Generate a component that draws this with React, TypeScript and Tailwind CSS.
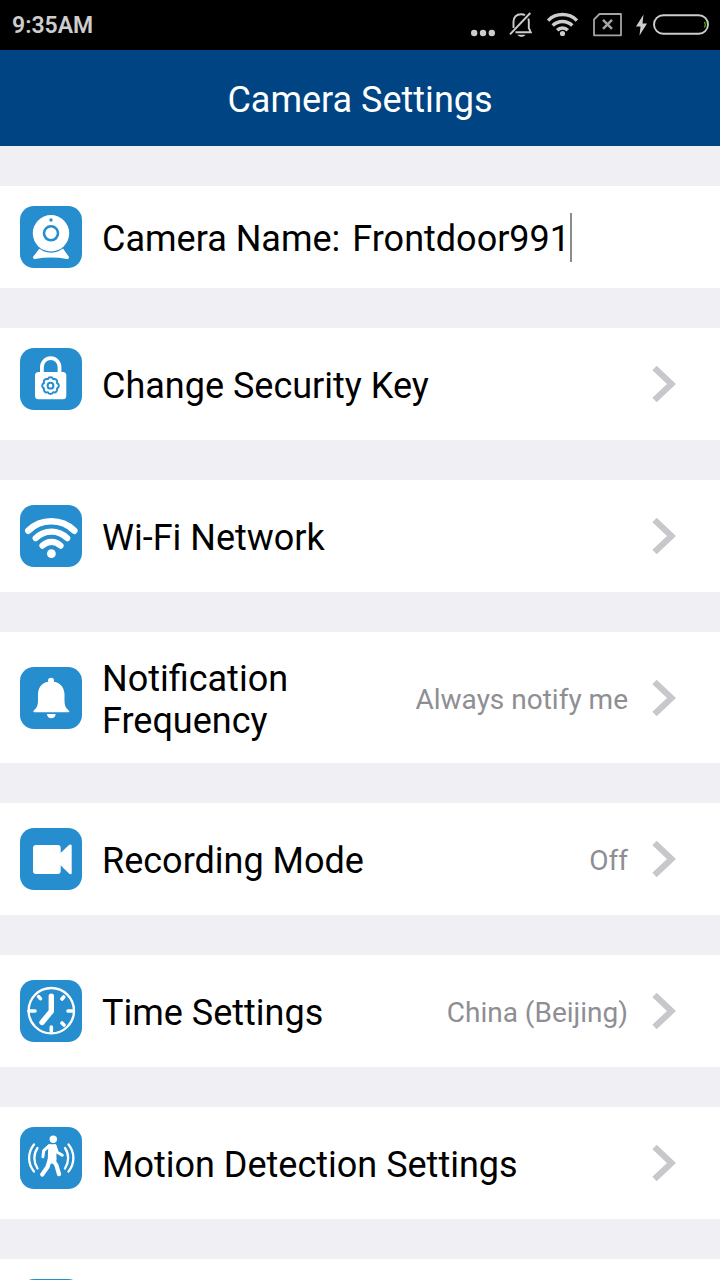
import type { ReactNode } from "react";

const BLUE = "#268dcf";

function IconTile({ children, top = false }: { children?: ReactNode; top?: boolean }) {
  return (
    <span
      className={`size-[62px] shrink-0 overflow-hidden rounded-[14px] bg-[#268dcf] ${top ? "self-start" : "self-center"}`}
    >
      <svg viewBox="0 0 62 62" className="size-full" fill="none" aria-hidden>
        {children}
      </svg>
    </span>
  );
}

function WebcamIcon() {
  return (
    <>
      <path
        d="M19.5 42.5 13.3 50.5c-.8 1.7.2 2.8 1.7 2.5 10.700-1.900 21.300-1.900 32 0 1.500.3 2.500-.8 1.700-2.500L43 42.500z"
        fill="#fff"
      />
      <circle cx="31" cy="27.300" r="19.400" fill={BLUE} />
      <circle cx="31" cy="27.300" r="18.200" fill="#fff" />
      <circle cx="31" cy="27.300" r="7" stroke={BLUE} strokeWidth="2.600" />
      <circle cx="31" cy="14" r="1.700" fill={BLUE} />
    </>
  );
}

function LockIcon() {
  return (
    <>
      <path d="M21.900 26v-7a8.800 8.800 0 0 1 17.600 0v7" stroke="#fff" strokeWidth="3.800" />
      <rect x="15" y="24" width="31.300" height="27.300" rx="3.500" fill="#fff" />
      <g transform="translate(30.500 37.700)" stroke={BLUE} strokeWidth="2">
        <path
          d="M6.500 2.700A2.900 2.900 0 0 1 2.700 6.500 2.900 2.900 0 0 1-2.700 6.500 2.900 2.900 0 0 1-6.500 2.700 2.900 2.900 0 0 1-6.500-2.700 2.900 2.900 0 0 1-2.700-6.500 2.900 2.900 0 0 1 2.700-6.500 2.900 2.900 0 0 1 6.500-2.700 2.900 2.900 0 0 1 6.500 2.700z"
          strokeLinejoin="round"
        />
        <circle r="2.900" />
      </g>
    </>
  );
}

function WifiIcon() {
  return (
    <>
      <g stroke="#fff" strokeLinecap="round">
        <path d="M8.300 25.700a33 33 0 0 1 46 0" strokeWidth="6.500" />
        <path d="M15.700 33.200a22 22 0 0 1 31.500 0" strokeWidth="6.200" />
        <path d="M22.500 40.700a12.500 12.500 0 0 1 18 0" strokeWidth="6.200" />
      </g>
      <circle cx="31.400" cy="48.700" r="4.400" fill="#fff" />
    </>
  );
}

function BellIcon() {
  return (
    <g fill="#fff">
      <circle cx="31" cy="13.800" r="3" />
      <path d="M31 14.500c7.500 0 13.200 4.500 13.500 12.500v6c0 5.500 1 7.500 4.500 10.800.6.700.3 1.400-.6 1.400H14.200c-.9 0-1.200-.7-.6-1.400C17 40.500 18 38.500 18 33v-6c.3-8 5.500-12.500 13-12.500z" />
      <path d="M26.900 47h8.800c-.3 2.700-2 4.300-4.400 4.300s-4.100-1.600-4.400-4.300z" />
    </g>
  );
}

function VideoIcon() {
  return (
    <g fill="#fff">
      <rect x="13" y="17" width="27.700" height="29" rx="3" />
      <path d="M40 25.500 48.800 17.300c1.300-1.200 2.900-.8 2.900.8v26.800c0 1.600-1.500 1.700-2.700.5L40 36.700z" />
    </g>
  );
}

function ClockIcon() {
  return (
    <g stroke="#fff" strokeLinecap="round" strokeLinejoin="round">
      <circle cx="31.300" cy="30.700" r="22.700" strokeWidth="2.300" />
      <path d="M31.300 16.200v15L22 42.500" strokeWidth="5.400" />
      <path
        d="M9 31h6M48 31h5M31.300 47v4M18.700 16.700l1.700 2M43.700 17l-1.700 2M42 43l2 2"
        strokeWidth="3.600"
      />
    </g>
  );
}

function MotionIcon() {
  return (
    <>
      <circle cx="33.300" cy="12.300" r="3.700" fill="#fff" />
      <path
        d="M29.500 18.500h5.500l.3 14.500-3.300 2.500-3-2.500z"
        fill="#fff"
        stroke="#fff"
        strokeWidth="2.500"
        strokeLinejoin="round"
      />
      <g stroke="#fff" strokeLinecap="round" strokeLinejoin="round">
        <path d="M29.300 18.700l-5.600 5-.8 6M35 18.700l2.300 6.500 5 3" strokeWidth="3" />
        <path d="M30 32l-2.500 8-5.300 7.500M32.500 32l4 6.500 2.500 8.700" strokeWidth="4.200" />
        <path
          d="M14 17.500c-6.500 8-6.500 19 0 27M17.500 21c-4.200 6-4.200 14 0 20.500M48.500 17.500c6.500 8 6.500 19 0 27M45 21c4.200 6 4.200 14 0 20.500"
          strokeWidth="2.300"
        />
      </g>
    </>
  );
}

function Chevron() {
  return (
    <svg viewBox="0 0 24 36" className="h-9 w-6 shrink-0" fill="none" aria-hidden>
      <path d="M2.500 2 19.500 18 2.500 34" stroke="#c7c7cc" strokeWidth="6.200" />
    </svg>
  );
}

type SettingRow = {
  label: string;
  icon: ReactNode;
  value?: string;
  iconTop?: boolean;
  tall?: boolean;
};

const ROWS: SettingRow[] = [
  { label: "Change Security Key", icon: <LockIcon />, iconTop: true },
  { label: "Wi-Fi Network", icon: <WifiIcon /> },
  { label: "Notification Frequency", icon: <BellIcon />, value: "Always notify me", tall: true },
  { label: "Recording Mode", icon: <VideoIcon />, value: "Off" },
  { label: "Time Settings", icon: <ClockIcon />, value: "China (Beijing)" },
  { label: "Motion Detection Settings", icon: <MotionIcon />, iconTop: true },
];

function StatusBar() {
  return (
    <div className="flex h-[50px] shrink-0 items-center bg-black pr-[11px] pl-3 text-[#cdcdcd]">
      <span className="pt-0.5 text-[23px] leading-7 font-semibold">9:35AM</span>
      <div className="ml-auto flex items-center" aria-hidden>
        <svg viewBox="0 0 24 26" className="mr-3.5 h-[26px] w-6" fill="currentColor">
          <circle cx="3.200" cy="21" r="3.200" />
          <circle cx="12" cy="21" r="3.200" />
          <circle cx="20.800" cy="21" r="3.200" />
        </svg>
        <svg viewBox="0 0 23 26" className="mr-[15px] h-[26px] w-[23px]" fill="none" stroke="currentColor" strokeWidth="1.900">
          <path d="M4.500 16V9.500C4.500 5 7.500 2.300 12 2.300c1.600 0 3 .3 4 1M19.300 6.500c.4 1 .5 2 .5 3V16l1.900 4.200H6.500" />
          <path d="M21.300 1 1 22.300" />
          <path d="M8.500 22.700h8c-1 1.500-2.300 2-4 2s-3-.5-4-2z" fill="currentColor" stroke="none" />
        </svg>
        <svg viewBox="0 0 31 26" className="mr-[15px] h-[26px] w-[31px]" fill="none" stroke="currentColor" strokeWidth="3.500">
          <path d="M1 8.600a20.500 20.500 0 0 1 29 0M5.700 13.600a14 14 0 0 1 19.600 0M10.200 18.300a7.500 7.500 0 0 1 10.600 0" />
          <circle cx="15.500" cy="21.500" r="2.600" fill="currentColor" stroke="none" />
        </svg>
        <svg viewBox="0 0 29 26" className="mr-3.5 h-[26px] w-[29px] text-[#a4a4a4]" fill="none" stroke="currentColor">
          <path d="M6.500 2H28v21.300H1V7.500z" strokeWidth="1.800" strokeLinejoin="round" />
          <path d="m10 7.800 9 9M19 7.800l-9 9" strokeWidth="2.500" />
        </svg>
        <svg viewBox="0 0 11 26" className="mr-1.5 h-[26px] w-[11px]" fill="currentColor">
          <path d="M7.500 2.500 0 14.500h4.500L3.500 23.500 11 11.500H6.500z" />
        </svg>
        <svg viewBox="0 0 56 26" className="h-[26px] w-14" fill="none">
          <rect x="1" y="3.200" width="54" height="18.600" rx="9.300" stroke="currentColor" strokeWidth="1.900" />
          <path d="M51.500 9.700q1.500 2.800 0 5.800" stroke="#4fb800" strokeWidth="1.300" />
        </svg>
      </div>
    </div>
  );
}

export default function App() {
  return (
    <div className="flex h-screen flex-col overflow-hidden bg-[#efeff4] font-['Roboto',sans-serif] text-black">
      <StatusBar />

      <header className="flex h-24 shrink-0 items-center justify-center bg-[#004483]">
        <h1 className="pt-1 text-4xl leading-[42px] font-normal text-white">Camera Settings</h1>
      </header>

      <main className="flex flex-1 flex-col gap-10 overflow-y-auto pt-10 [scrollbar-width:none]">
        <div className="flex shrink-0 items-center gap-5 bg-white p-5 pr-11">
          <IconTile>
            <WebcamIcon />
          </IconTile>
          <div className="flex min-w-0 items-center text-4xl leading-[42px]">
            <label htmlFor="camera-name" className="mr-3 pt-1 whitespace-nowrap">
              Camera Name:
            </label>
            <input
              id="camera-name"
              type="text"
              defaultValue="Frontdoor991"
              className="field-sizing-content min-w-0 bg-transparent pt-1 outline-none"
            />
            <span className="h-[49px] w-0.5 shrink-0 bg-[#8c8c8c]" aria-hidden />
          </div>
        </div>

        {ROWS.map((row) => (
          <button
            key={row.label}
            type="button"
            className={`flex w-full shrink-0 items-center bg-white py-5 pr-11 pl-5 text-left ${row.tall ? "min-h-[131px]" : "min-h-28"}`}
          >
            <IconTile top={row.iconTop}>{row.icon}</IconTile>
            <span className="ml-5 min-w-0 flex-1 pt-1 text-4xl leading-[42px]">{row.label}</span>
            {row.value && (
              <span className="ml-5 shrink-0 pt-1 text-[28px] leading-8 whitespace-nowrap text-[#8e8e93]">
                {row.value}
              </span>
            )}
            <span className="ml-6 shrink-0">
              <Chevron />
            </span>
          </button>
        ))}

        <div className="flex min-h-28 shrink-0 items-center bg-white py-5 pr-11 pl-5">
          <IconTile top />
        </div>
      </main>
    </div>
  );
}
